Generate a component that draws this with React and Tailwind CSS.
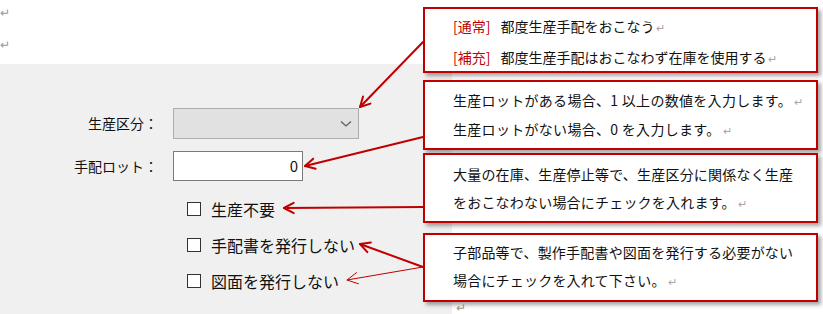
import React from "react";

const FONT = { fontFamily: '"Noto Sans CJK JP", "Noto Sans", sans-serif' };

function Arrow({ x1, y1, x2, y2, w = 2, head = 11 }) {
  const ang = Math.atan2(y1 - y2, x1 - x2);
  const a = (28 * Math.PI) / 180;
  const p1 = [x2 + head * Math.cos(ang + a), y2 + head * Math.sin(ang + a)];
  const p2 = [x2 + head * Math.cos(ang - a), y2 + head * Math.sin(ang - a)];
  return (
    <g stroke="#c00000" strokeWidth={w} fill="none" strokeLinecap="round" strokeLinejoin="round">
      <line x1={x1} y1={y1} x2={x2} y2={y2} />
      <polyline points={`${p1[0]},${p1[1]} ${x2},${y2} ${p2[0]},${p2[1]}`} />
    </g>
  );
}

const Ret = () => <span className="text-[11px] text-[#a6a6a6] ml-[2px]">↵</span>;

function Box({ top, height, children, pt }) {
  return (
    <div
      className="absolute left-[423px] w-[395px] bg-white border-2 border-[#c00000] shadow-[3px_3px_4px_rgba(0,0,0,0.35)] pl-[28px] text-[14px] text-[#111]"
      style={{ top, height, paddingTop: pt }}
    >
      {children}
    </div>
  );
}

function Check({ label }) {
  return (
    <div className="flex items-center h-[36px]">
      <div className="w-[14px] h-[14px] border border-[#333] bg-white" />
      <span className="ml-[10px] text-[16px] text-[#111] leading-none">{label}</span>
    </div>
  );
}

export default function App() {
  return (
    <div className="relative w-[823px] h-[314px] bg-white overflow-hidden" style={FONT}>
      <div className="h-[64px] pt-[3px]">
        <div className="h-[18px] leading-[18px] text-[12px] text-[#9a9a9a]">↵</div>
        <div className="h-[14px]" />
        <div className="h-[18px] leading-[18px] text-[12px] text-[#9a9a9a]">↵</div>
      </div>
      <div className="w-[452px] h-[250px] bg-[#f0f0f0] pt-[44px]">
        <div className="flex items-center h-[31px]">
          <div className="w-[158px] text-right text-[14px] text-[#111]">生産区分：</div>
          <div className="ml-[15px] w-[186px] h-[31px] bg-[#e1e1e1] border border-[#adadad] flex items-center justify-end pr-[6px]">
            <svg width="12" height="8" viewBox="0 0 12 8">
              <polyline points="1,1.5 6,6 11,1.5" fill="none" stroke="#606060" strokeWidth="1.3" />
            </svg>
          </div>
        </div>
        <div className="flex items-center h-[30px] mt-[12px]">
          <div className="w-[158px] text-right text-[14px] text-[#111]">手配ロット：</div>
          <div className="ml-[15px] w-[130px] h-[30px] bg-white border border-[#7a7a7a] flex items-center justify-end pr-[4px] text-[15px] text-[#111]">
            0
          </div>
        </div>
        <div className="pl-[187px] mt-[10px]">
          <Check label="生産不要" />
          <Check label="手配書を発行しない" />
          <Check label="図面を発行しない" />
        </div>
      </div>

      <div className="absolute left-[456px] top-[300px] text-[12px] text-[#9a9a9a] leading-[14px]">↵</div>

      <Box top={7} height={66} pt={2}>
        <div className="leading-[30px]">
          <span className="text-[#c00000]">[通常]</span>
          <span className="ml-[10px]">都度生産手配をおこなう</span>
          <Ret />
        </div>
        <div className="leading-[30px]">
          <span className="text-[#c00000]">[補充]</span>
          <span className="ml-[10px]">都度生産手配はおこなわず在庫を使用する</span>
          <Ret />
        </div>
      </Box>
      <Box top={80} height={70} pt={4}>
        <div className="leading-[28px] tracking-[0.3px]">生産ロットがある場合、1 以上の数値を入力します。<Ret /></div>
        <div className="leading-[28px] tracking-[0.3px]">生産ロットがない場合、0 を入力します。<Ret /></div>
      </Box>
      <Box top={153} height={70} pt={5}>
        <div className="leading-[28px] tracking-[0.2px]">大量の在庫、生産停止等で、生産区分に関係なく生産</div>
        <div className="leading-[28px] tracking-[0.2px]">をおこなわない場合にチェックを入れます。<Ret /></div>
      </Box>
      <Box top={233} height={69} pt={3}>
        <div className="leading-[28px] tracking-[0.2px]">子部品等で、製作手配書や図面を発行する必要がない</div>
        <div className="leading-[28px] tracking-[0.2px]">場合にチェックを入れて下さい。<Ret /></div>
      </Box>

      <svg className="absolute left-0 top-0 pointer-events-none" width="823" height="314">
        <Arrow x1={423} y1={42} x2={360} y2={107} />
        <Arrow x1={423} y1={137} x2={305} y2={166} />
        <Arrow x1={423} y1={207} x2={284} y2={208} />
        <Arrow x1={423} y1={267} x2={360} y2={244} />
        <Arrow x1={423} y1={267} x2={347} y2={280} w={1} head={12} />
      </svg>
    </div>
  );
}
